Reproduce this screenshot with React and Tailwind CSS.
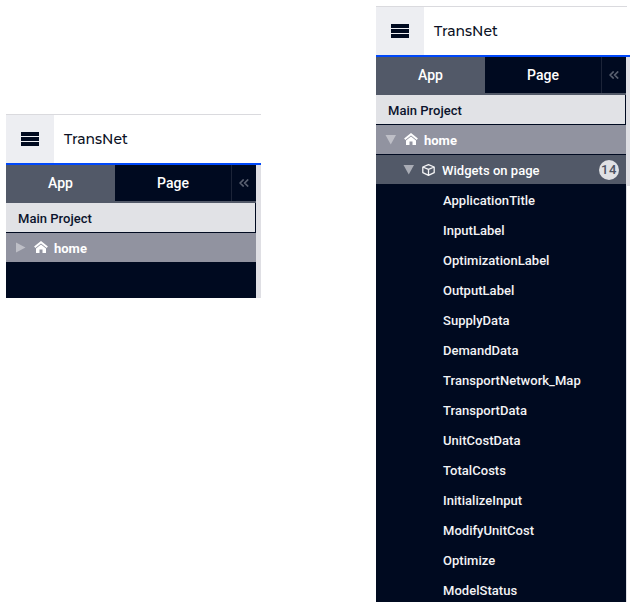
import React from "react";

const widgets = [
  "ApplicationTitle",
  "InputLabel",
  "OptimizationLabel",
  "OutputLabel",
  "SupplyData",
  "DemandData",
  "TransportNetwork_Map",
  "TransportData",
  "UnitCostData",
  "TotalCosts",
  "InitializeInput",
  "ModifyUnitCost",
  "Optimize",
  "ModelStatus",
];

function Header({ lineWidth }) {
  return (
    <header>
      <div className={`h-px bg-[#dadade] ${lineWidth}`} />
      <div className="flex h-12 items-center">
        <div className="flex h-12 w-12 flex-col items-center justify-center gap-px bg-[#edeef2]">
          <span className="h-1 w-[18px] bg-[#000a20]" />
          <span className="h-1 w-[18px] bg-[#000a20]" />
          <span className="h-1 w-[18px] bg-[#000a20]" />
        </div>
        <h1 className="pl-[10px] font-['Montserrat','Inter',sans-serif] text-[14px] leading-5 font-medium text-[#0b1024]">
          TransNet
        </h1>
      </div>
      <div className="h-0.5 bg-[#0048fa]" />
    </header>
  );
}

function Tabs() {
  return (
    <nav className="h-[38px] bg-[#525968]">
      <div className="flex h-9 text-[14px] leading-9 font-medium text-white">
        <div className="w-[109px] text-center">App</div>
        <div className="w-[116px] bg-[#000a20] text-center">Page</div>
        <div className="flex w-[25px] items-center justify-center border-l border-[#1c2438] bg-[#000a20]">
          <svg width="10" height="8" viewBox="0 0 10 8" fill="none" stroke="#596070" strokeWidth="1.7">
            <path d="M4.7 0.5 1.2 4l3.5 3.5M9.2 0.5 5.7 4l3.5 3.5" />
          </svg>
        </div>
      </div>
    </nav>
  );
}

function Arrow({ open, fill }) {
  return (
    <svg width="11" height="11" viewBox="0 0 11 11" className="shrink-0" fill={fill}>
      <path d={open ? "M0.5 1H11L5.75 10.5Z" : "M1 0.5 10.5 5.5 1 10.5Z"} />
    </svg>
  );
}

function HomeIcon() {
  return (
    <svg width="14" height="12" viewBox="0 0 14 12" className="block shrink-0">
      <path d="M.7 6.3 7 1.2l6.3 5.1" fill="none" stroke="white" strokeWidth="1.9" />
      <path d="M2 7.4 7 3.4l5 4V12H8.5V8.4H5.5V12H2Z" fill="white" />
    </svg>
  );
}

function CubeIcon() {
  return (
    <svg width="13" height="12" viewBox="0 0 13 12" fill="none" stroke="#f3f3f5" strokeWidth="1.3" strokeLinejoin="round" className="block shrink-0">
      <path d="M6.5.7 12.2 3v5.7l-5.7 2.6L.8 8.7V3ZM.8 3l5.7 2.4L12.2 3M6.5 5.4v5.9" />
    </svg>
  );
}

function Project({ open }) {
  return (
    <>
      <div className="h-[30px] border-r border-b border-[#000a20] bg-[#e1e2e6] pl-3 leading-[31px] font-medium tracking-[0.02px] text-[#0b132d]">
        Main Project
      </div>
      <div className="flex h-[29px] items-center bg-[#9193a0] pl-[9px] font-bold text-white">
        <Arrow open={open} fill="#bebfc7" />
        <span className="ml-2 pb-px"><HomeIcon /></span>
        <span className="ml-1.5 pt-px leading-[29px]">home</span>
      </div>
    </>
  );
}

function Panel({ open }) {
  return (
    <section className={open ? "w-[254px]" : "w-[255px]"}>
      <Header lineWidth={open ? "w-[251px]" : "w-full"} />
      <div className="flex">
        <div className={open ? "h-[545px] w-[250px] bg-[#000a20]" : "h-[133px] w-[250px] bg-[#000a20]"}>
          <Tabs />
          <Project open={open} />
          {open && (
            <>
              <div className="mt-px flex h-[29px] items-center bg-[#525968] pr-[7px] pl-[27px] font-medium text-white">
                <Arrow open fill="#a9acb5" />
                <span className="ml-2"><CubeIcon /></span>
                <span className="ml-[7px] pt-0.5 leading-[29px] tracking-[0.03px]">Widgets on page</span>
                <span className="ml-auto flex h-5 w-5 items-center justify-center rounded-full bg-[#e0e1e4] pt-px font-['Roboto',sans-serif] text-[13px] font-medium tracking-[0.5px] text-[#4d5362]">
                  14
                </span>
              </div>
              <ul className="pt-px pl-[67px] font-medium tracking-[0.03px] text-[#f3f3f5]">
                {widgets.map((name) => (
                  <li key={name} className="h-[30px] leading-[31px]">{name}</li>
                ))}
              </ul>
            </>
          )}
        </div>
        {open ? (
          <div className="flex-1">
            <div className="h-[129px] bg-[#dfdfe4]" />
            <div className="h-[416px] w-px bg-[#dfdfe4]" />
          </div>
        ) : (
          <div className="flex-1 bg-[#dfdfe4]" />
        )}
      </div>
    </section>
  );
}

export default function App() {
  return (
    <main className="flex h-[606px] w-[632px] items-start overflow-hidden bg-white pl-1.5 font-['Roboto',sans-serif] text-[13px]">
      <div className="pt-[114px]">
        <Panel open={false} />
      </div>
      <div className="ml-[115px] pt-1.5">
        <Panel open />
      </div>
    </main>
  );
}
